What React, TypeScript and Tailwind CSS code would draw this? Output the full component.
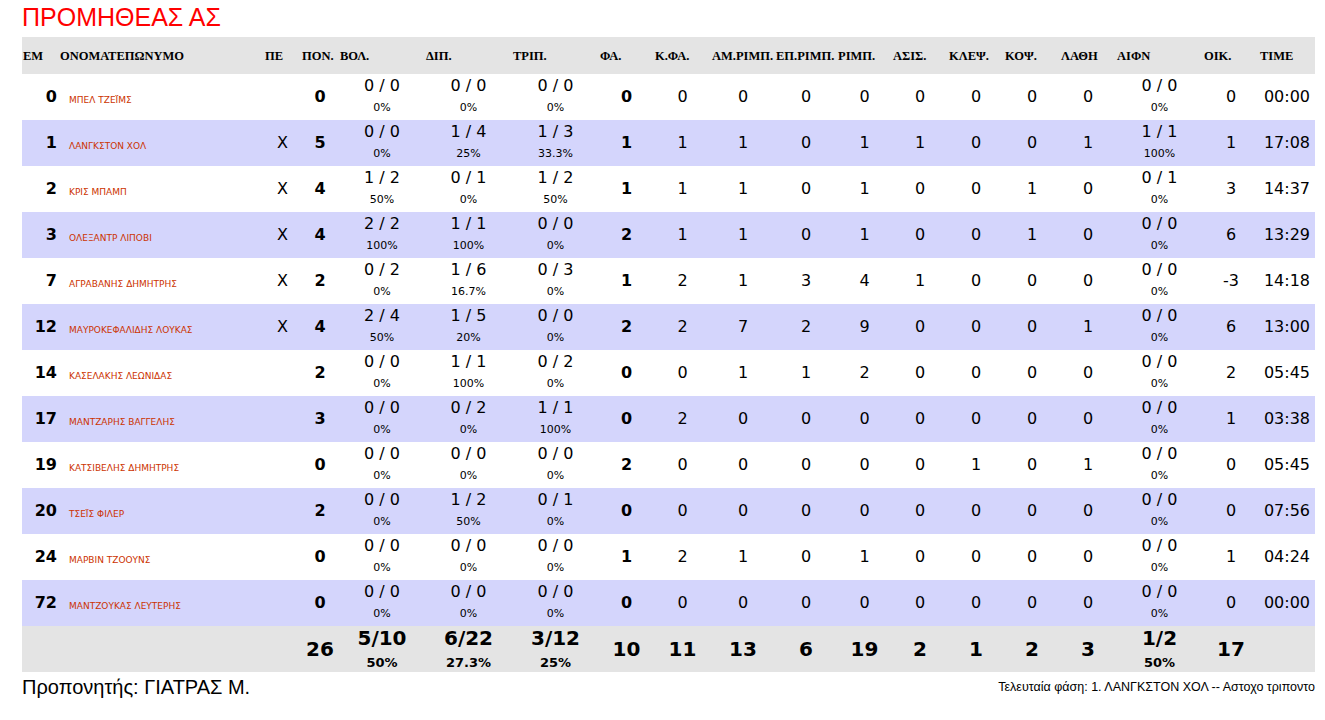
import { type ReactElement } from "react";

type Shot = [string, string];
type Row = {
  no: number;
  name: string;
  starter: boolean;
  pts: number;
  ft: Shot;
  two: Shot;
  three: Shot;
  fouls: number;
  fd: number;
  oreb: number;
  dreb: number;
  reb: number;
  ast: number;
  stl: number;
  blk: number;
  to: number;
  aifn: Shot;
  pm: number;
  time: string;
};

const cols = "grid grid-cols-[37px_205px_37px_38px_86px_87px_87px_55px_57px_64px_62px_55px_56px_56px_56px_56px_87px_56px_56px]";

const headers = [
  "ΕΜ",
  "ΟΝΟΜΑΤΕΠΩΝΥΜΟ",
  "ΠΕ",
  "ΠΟΝ.",
  "ΒΟΛ.",
  "ΔΙΠ.",
  "ΤΡΙΠ.",
  "ΦΑ.",
  "Κ.ΦΑ.",
  "ΑΜ.ΡΙΜΠ.",
  "ΕΠ.ΡΙΜΠ.",
  "ΡΙΜΠ.",
  "ΑΣΙΣ.",
  "ΚΛΕΨ.",
  "ΚΟΨ.",
  "ΛΑΘΗ",
  "ΑΙΦΝ",
  "ΟΙΚ.",
  "TIME",
];

const z: Shot = ["0 / 0", "0%"];

const rows: Row[] = [
  { no: 0, name: "ΜΠΕΛ ΤΖΕΪΜΣ", starter: false, pts: 0, ft: z, two: z, three: z, fouls: 0, fd: 0, oreb: 0, dreb: 0, reb: 0, ast: 0, stl: 0, blk: 0, to: 0, aifn: z, pm: 0, time: "00:00" },
  { no: 1, name: "ΛΑΝΓΚΣΤΟΝ ΧΟΛ", starter: true, pts: 5, ft: z, two: ["1 / 4", "25%"], three: ["1 / 3", "33.3%"], fouls: 1, fd: 1, oreb: 1, dreb: 0, reb: 1, ast: 1, stl: 0, blk: 0, to: 1, aifn: ["1 / 1", "100%"], pm: 1, time: "17:08" },
  { no: 2, name: "ΚΡΙΣ ΜΠΑΜΠ", starter: true, pts: 4, ft: ["1 / 2", "50%"], two: ["0 / 1", "0%"], three: ["1 / 2", "50%"], fouls: 1, fd: 1, oreb: 1, dreb: 0, reb: 1, ast: 0, stl: 0, blk: 1, to: 0, aifn: ["0 / 1", "0%"], pm: 3, time: "14:37" },
  { no: 3, name: "ΟΛΕΞΑΝΤΡ ΛΙΠΟΒΙ", starter: true, pts: 4, ft: ["2 / 2", "100%"], two: ["1 / 1", "100%"], three: z, fouls: 2, fd: 1, oreb: 1, dreb: 0, reb: 1, ast: 0, stl: 0, blk: 1, to: 0, aifn: z, pm: 6, time: "13:29" },
  { no: 7, name: "ΑΓΡΑΒΑΝΗΣ ΔΗΜΗΤΡΗΣ", starter: true, pts: 2, ft: ["0 / 2", "0%"], two: ["1 / 6", "16.7%"], three: ["0 / 3", "0%"], fouls: 1, fd: 2, oreb: 1, dreb: 3, reb: 4, ast: 1, stl: 0, blk: 0, to: 0, aifn: z, pm: -3, time: "14:18" },
  { no: 12, name: "ΜΑΥΡΟΚΕΦΑΛΙΔΗΣ ΛΟΥΚΑΣ", starter: true, pts: 4, ft: ["2 / 4", "50%"], two: ["1 / 5", "20%"], three: z, fouls: 2, fd: 2, oreb: 7, dreb: 2, reb: 9, ast: 0, stl: 0, blk: 0, to: 1, aifn: z, pm: 6, time: "13:00" },
  { no: 14, name: "ΚΑΣΕΛΑΚΗΣ ΛΕΩΝΙΔΑΣ", starter: false, pts: 2, ft: z, two: ["1 / 1", "100%"], three: ["0 / 2", "0%"], fouls: 0, fd: 0, oreb: 1, dreb: 1, reb: 2, ast: 0, stl: 0, blk: 0, to: 0, aifn: z, pm: 2, time: "05:45" },
  { no: 17, name: "ΜΑΝΤΖΑΡΗΣ ΒΑΓΓΕΛΗΣ", starter: false, pts: 3, ft: z, two: ["0 / 2", "0%"], three: ["1 / 1", "100%"], fouls: 0, fd: 2, oreb: 0, dreb: 0, reb: 0, ast: 0, stl: 0, blk: 0, to: 0, aifn: z, pm: 1, time: "03:38" },
  { no: 19, name: "ΚΑΤΣΙΒΕΛΗΣ ΔΗΜΗΤΡΗΣ", starter: false, pts: 0, ft: z, two: z, three: z, fouls: 2, fd: 0, oreb: 0, dreb: 0, reb: 0, ast: 0, stl: 1, blk: 0, to: 1, aifn: z, pm: 0, time: "05:45" },
  { no: 20, name: "ΤΣΕΪΣ ΦΙΛΕΡ", starter: false, pts: 2, ft: z, two: ["1 / 2", "50%"], three: ["0 / 1", "0%"], fouls: 0, fd: 0, oreb: 0, dreb: 0, reb: 0, ast: 0, stl: 0, blk: 0, to: 0, aifn: z, pm: 0, time: "07:56" },
  { no: 24, name: "ΜΑΡΒΙΝ ΤΖΟΟΥΝΣ", starter: false, pts: 0, ft: z, two: z, three: z, fouls: 1, fd: 2, oreb: 1, dreb: 0, reb: 1, ast: 0, stl: 0, blk: 0, to: 0, aifn: z, pm: 1, time: "04:24" },
  { no: 72, name: "ΜΑΝΤΖΟΥΚΑΣ ΛΕΥΤΕΡΗΣ", starter: false, pts: 0, ft: z, two: z, three: z, fouls: 0, fd: 0, oreb: 0, dreb: 0, reb: 0, ast: 0, stl: 0, blk: 0, to: 0, aifn: z, pm: 0, time: "00:00" },
];

function ShotCell({ s }: { s: Shot }): ReactElement {
  return (
    <div className="flex flex-col items-center pt-[3px]">
      <div className="text-[16px] leading-[18px]">{s[0]}</div>
      <div className="mt-[5px] text-[11px] leading-[16px]">{s[1]}</div>
    </div>
  );
}

function Num({ v, bold }: { v: number | string; bold?: boolean }): ReactElement {
  return <div className={`flex items-center justify-center text-[16px] ${bold ? "font-bold" : ""}`}>{v}</div>;
}

function TotalShot({ a, b }: { a: string; b: string }): ReactElement {
  return (
    <div className="flex flex-col items-center pt-px font-bold">
      <div className="text-[20px] leading-[22px]">{a}</div>
      <div className="mt-[6px] text-[13px] leading-[16px]">{b}</div>
    </div>
  );
}

function Total({ v }: { v: string }): ReactElement {
  return <div className="flex items-center justify-center">{v}</div>;
}

export default function App(): ReactElement {
  return (
    <div className="ml-[22px] w-[1293px] bg-white text-black">
      <div className="pt-[4px] font-['Liberation_Sans',Arial,sans-serif] text-[25px] leading-[27px] text-[#ff0000]">ΠΡΟΜΗΘΕΑΣ ΑΣ</div>
      <div className="mt-[6px] font-['DejaVu_Sans',Verdana,sans-serif]">
        <div className={`${cols} h-[37px] bg-[#e4e4e4] font-['Liberation_Serif','Times_New_Roman',serif] text-[12.5px] font-bold`}>
          {headers.map((h) => (
            <div key={h} className="flex items-center pl-px pt-px">
              {h}
            </div>
          ))}
        </div>
        {rows.map((r, i) => (
          <div key={r.no} className={`${cols} h-[46px] ${i % 2 === 1 ? "bg-[#d4d5fc]" : "bg-white"}`}>
            <div className="flex items-center justify-end pr-[2px] text-[16px] font-bold">{r.no}</div>
            <div className="flex items-center pl-[10px] pt-[7px] text-[9px] text-[#cc3300]">{r.name}</div>
            <Num v={r.starter ? "X" : ""} />
            <Num v={r.pts} bold />
            <ShotCell s={r.ft} />
            <ShotCell s={r.two} />
            <ShotCell s={r.three} />
            <Num v={r.fouls} bold />
            <Num v={r.fd} />
            <Num v={r.oreb} />
            <Num v={r.dreb} />
            <Num v={r.reb} />
            <Num v={r.ast} />
            <Num v={r.stl} />
            <Num v={r.blk} />
            <Num v={r.to} />
            <ShotCell s={r.aifn} />
            <Num v={r.pm} />
            <Num v={r.time} />
          </div>
        ))}
        <div className={`${cols} h-[46px] bg-[#e4e4e4] text-[20px] font-bold`}>
          <div />
          <div />
          <div />
          <Total v="26" />
          <TotalShot a="5/10" b="50%" />
          <TotalShot a="6/22" b="27.3%" />
          <TotalShot a="3/12" b="25%" />
          <Total v="10" />
          <Total v="11" />
          <Total v="13" />
          <Total v="6" />
          <Total v="19" />
          <Total v="2" />
          <Total v="1" />
          <Total v="2" />
          <Total v="3" />
          <TotalShot a="1/2" b="50%" />
          <Total v="17" />
          <div />
        </div>
      </div>
      <div className="mt-[4px] flex items-start justify-between font-['Liberation_Sans',Arial,sans-serif]">
        <div className="text-[20px] leading-[23px]">Προπονητής: ΓΙΑΤΡΑΣ Μ.</div>
        <div className="pt-[4px] text-[12.5px] leading-[14px]">Τελευταία φάση: 1. ΛΑΝΓΚΣΤΟΝ ΧΟΛ -- Αστοχο τριποντο</div>
      </div>
    </div>
  );
}
